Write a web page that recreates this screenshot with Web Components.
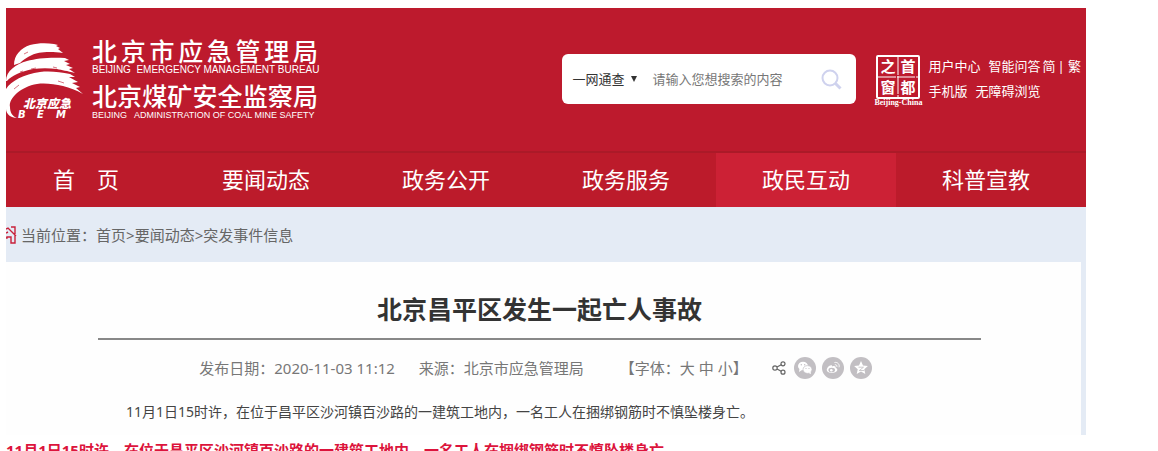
<!DOCTYPE html>
<html lang="zh-CN">
<head>
<meta charset="utf-8">
<title>北京昌平区发生一起亡人事故</title>
<style>
  html {
    overflow: hidden;
  }
  body {
    margin: 8px 72px 0 6px;
    background: #fff;
    color: #666;
    font: 15px/20px "Noto Sans", "Noto Sans CJK SC", sans-serif;
  }
  .lead {
    margin: 5px 0 0;
    color: #dc143c;
    font-weight: bold;
    white-space: nowrap;
  }
</style>
</head>
<body>
<site-header>
  <site-logo></site-logo>
  <search-box placeholder="请输入您想搜索的内容"></search-box>
  <user-links></user-links>
</site-header>
<site-nav>
  <nav-item>首　页</nav-item>
  <nav-item>要闻动态</nav-item>
  <nav-item>政务公开</nav-item>
  <nav-item>政务服务</nav-item>
  <nav-item active>政民互动</nav-item>
  <nav-item>科普宣教</nav-item>
</site-nav>
<bread-crumb></bread-crumb>
<news-article date="2020-11-03 11:12" source="北京市应急管理局">
  <span slot="title">北京昌平区发生一起亡人事故</span>
  11月1日15时许，在位于昌平区沙河镇百沙路的一建筑工地内，一名工人在捆绑钢筋时不慎坠楼身亡。
</news-article>
<p class="lead">11月1日15时许，在位于昌平区沙河镇百沙路的一建筑工地内，一名工人在捆绑钢筋时不慎坠楼身亡。</p>

<script>
class SiteHeader extends HTMLElement {
  constructor() {
    super();
    this.attachShadow({ mode: 'open' });
    this.shadowRoot.innerHTML = `
      <style>
        :host {
          display: flex;
          align-items: flex-start;
          box-sizing: border-box;
          height: 143px;
          padding-top: 28px;
          background: #bd1a2d;
          color: #fff;
        }
        ::slotted(search-box) {
          margin: 18px 18px 0 auto;
        }
        ::slotted(user-links) {
          margin-top: 18px;
        }
      </style>
      <slot></slot>
    `;
  }
}

class SiteLogo extends HTMLElement {
  constructor() {
    super();
    this.attachShadow({ mode: 'open' });
    this.shadowRoot.innerHTML = `
      <style>
        :host {
          display: flex;
          gap: 8px;
        }
        svg {
          margin-top: 7px;
          overflow: visible;
        }
        .names {
          width: 226px;
        }
        .cn {
          height: 28px;
          font-size: 25px;
          line-height: 28px;
          font-weight: 500;
          font-family: "Noto Sans CJK SC", sans-serif;
          text-align-last: justify;
          white-space: nowrap;
        }
        .en {
          height: 17px;
          font: 10px/12px "Liberation Sans", sans-serif;
          white-space: nowrap;
        }
        .small {
          font-size: 9px;
        }
      </style>
      <svg width="78" height="78" viewBox="0 0 78 78" fill="#fff">
        <path d="M8 22C8 12 15 5 24 2 32 0 40 0 48 1l4 1-2 1 4 2-2 1 5 4C52 9 48 9 44 9 35 9 30 10 26 12c-5 2-9 5-12 8z"/>
        <path d="M0 38C0 28 10 21 21 18c10-3 25-4 38-3l4 2-5 1 6 3-4 1 7 3-4 1 6 4C61 28 56 27 51 26c-8-1-16-1-24 0-6 1-12 3-16 5-4 2-8 4-10 7z"/>
        <path d="M0 46C5 38 18 31 34 29c10-1 20 0 30 2l5 3-6 0 9 5-6 1 8 4-4 1 7 6C70 47 64 45 57 43c-9-2-18-3-26-2-8 1-15 5-20 9-5 5-8 9-7 14 0 5 2 9 7 11C5 75 0 71 0 66z"/>
        <path d="M18 11l4-2M14 29l3-1M25 26l5-1M8 46l5-4M52 38l6 2M47 24l4 1" stroke="#bd1a2d" stroke-width=".6" fill="none"/>
        <text x="17" y="65" font-size="12" font-weight="900" font-style="italic" font-family="Noto Sans CJK SC">北京应急</text>
        <text x="12 31 50" y="75" font-size="10" font-weight="bold" font-style="italic" font-family="DejaVu Sans">BEM</text>
      </svg>
      <div class="names">
        <div class="cn">北京市应急管理局</div>
        <div class="en">BEIJING &nbsp;EMERGENCY MANAGEMENT BUREAU</div>
        <div class="cn">北京煤矿安全监察局</div>
        <div class="en small">BEIJING &nbsp; ADMINISTRATION OF COAL MINE SAFETY</div>
      </div>
    `;
  }
}

class SearchBox extends HTMLElement {
  constructor() {
    super();
    this.attachShadow({ mode: 'open' });
  }

  connectedCallback() {
    this.shadowRoot.innerHTML = `
      <style>
        :host {
          display: block;
          width: 294px;
        }
        form {
          display: flex;
          align-items: center;
          height: 50px;
          padding: 0 14px 0 10px;
          box-sizing: border-box;
          border-radius: 6px;
          background: #fff;
        }
        select, input, button {
          margin: 0;
          padding: 0;
          border: 0;
          outline: 0;
          background: none;
          font: inherit;
        }
        select {
          appearance: none;
          width: 68px;
          color: #333;
          font-size: 13px;
          background: url("data:image/svg+xml,%3Csvg xmlns='http://www.w3.org/2000/svg' width='6' height='6'%3E%3Cpath d='M0 0h6L3 6z' fill='%23333'/%3E%3C/svg%3E") no-repeat 59px 7px;
        }
        input {
          flex: 1;
          min-width: 0;
          margin-left: 12px;
          font-size: 13px;
        }
        input::placeholder {
          color: #777;
          opacity: 1;
        }
        button {
          display: flex;
        }
      </style>
      <form>
        <select aria-label="搜索范围"><option>一网通查</option></select>
        <input type="text" aria-label="搜索" placeholder="${this.getAttribute('placeholder')}">
        <button type="button" aria-label="搜索">
          <svg width="21" height="21" viewBox="0 0 21 21" fill="none" stroke="#cfd2ee" stroke-width="2">
            <circle cx="9" cy="9" r="7.5"/>
            <path d="M14.5 14.5l5 5" stroke-width="3"/>
          </svg>
        </button>
      </form>
    `;
  }
}

class UserLinks extends HTMLElement {
  constructor() {
    super();
    this.attachShadow({ mode: 'open' });
    this.shadowRoot.innerHTML = `
      <style>
        :host {
          display: flex;
          gap: 6px;
          padding-right: 5px;
          font-size: 13px;
          white-space: nowrap;
        }
        a {
          color: inherit;
          text-decoration: none;
        }
        .seal {
          display: flex;
          flex-direction: column;
          align-items: center;
          width: 48px;
          margin-top: 1px;
          font: bold 8px/8px "Liberation Serif", serif;
        }
        .seal svg {
          overflow: visible;
        }
        .row {
          display: flex;
          height: 25px;
          line-height: 24px;
        }
        .row a {
          margin-right: 8px;
        }
        .row .near {
          margin-right: 2px;
        }
        .row .last {
          margin-right: 0;
        }
      </style>
      <a class="seal" href="#">
        <svg width="44" height="44" viewBox="0 0 44 44" fill="#fff" font-size="15" font-weight="bold" font-family="Noto Sans CJK SC" text-anchor="middle">
          <rect x="1" y="1" width="42" height="42" rx="1" fill="none" stroke="#fff" stroke-width="2"/>
          <path d="M22 2v40M2 22h40" stroke="#fff" stroke-dasharray="18 1"/>
          <text x="12" y="17">之</text>
          <text x="32" y="17">首</text>
          <text x="12" y="38">窗</text>
          <text x="32" y="38">都</text>
        </svg>
        Beijing-China
      </a>
      <div>
        <div class="row"><a href="#">用户中心</a><a class="near" href="#">智能问答</a><a class="near" href="#">简</a>|&nbsp;<a class="last" href="#">繁</a></div>
        <div class="row"><a href="#">手机版</a><a href="#">无障碍浏览</a></div>
      </div>
    `;
  }
}

class SiteNav extends HTMLElement {
  constructor() {
    super();
    this.attachShadow({ mode: 'open' });
    this.shadowRoot.innerHTML = `
      <style>
        :host {
          display: block;
          overflow: hidden;
          border-top: 2px solid #ab1a28;
          background: #bc1b2b;
        }
        nav {
          display: grid;
          grid-template-columns: repeat(6, 1fr);
          margin: 0 10px 0 -10px;
        }
      </style>
      <nav><slot></slot></nav>
    `;
  }
}

class NavItem extends HTMLElement {
  constructor() {
    super();
    this.attachShadow({ mode: 'open' });
    this.shadowRoot.innerHTML = `
      <style>
        :host {
          display: block;
        }
        :host([active]) {
          background: #cc2135;
        }
        a {
          display: block;
          height: 54px;
          color: #fff;
          font-size: 22px;
          line-height: 52px;
          text-align: center;
          text-decoration: none;
        }
      </style>
      <a href="#"><slot></slot></a>
    `;
  }
}

class BreadCrumb extends HTMLElement {
  constructor() {
    super();
    this.attachShadow({ mode: 'open' });
    this.shadowRoot.innerHTML = `
      <style>
        :host {
          display: flex;
          align-items: center;
          gap: 4px;
          height: 55px;
          background: #e4ebf5;
        }
        a {
          color: inherit;
          text-decoration: none;
        }
      </style>
      <svg width="11" height="18" viewBox="0 0 11 18" fill="none" stroke="#c8203a" stroke-width="1.4">
        <path d="M0 3l2-1 8 8M5 1h4v7M0 7l2-1M9 9v8H5v-6H1v1H0"/>
      </svg>
      <span>当前位置：<a href="#">首页</a>&gt;<a href="#">要闻动态</a>&gt;<a href="#">突发事件信息</a></span>
    `;
  }
}

class ShareBar extends HTMLElement {
  constructor() {
    super();
    this.attachShadow({ mode: 'open' });
    this.shadowRoot.innerHTML = `
      <style>
        :host {
          display: flex;
          align-items: center;
          gap: 6px;
        }
        a {
          display: flex;
        }
        svg {
          display: block;
        }
        .share {
          margin-right: 2px;
        }
      </style>
      <a class="share" href="#" aria-label="分享">
        <svg width="14" height="14" viewBox="0 0 14 14" fill="none" stroke="#666" stroke-width="1.2">
          <circle cx="3" cy="7" r="2.2"/><circle cx="11" cy="2.8" r="2"/><circle cx="11" cy="11.2" r="2"/>
          <path d="M5 6l4.2-2.3M5 8l4.2 2.3"/>
        </svg>
      </a>
      <a href="#" aria-label="微信">
        <svg width="22" height="22" viewBox="0 0 22 22">
          <circle cx="11" cy="11" r="11" fill="#c2bfc3"/>
          <ellipse cx="9" cy="9" rx="5" ry="4.3" fill="#fff"/>
          <path d="M5.5 11.5L5 15l3-2z" fill="#fff"/>
          <ellipse cx="13.5" cy="12.5" rx="4.5" ry="3.9" fill="#fff" stroke="#c2bfc3" stroke-width=".7"/>
          <path d="M14.5 16l2.5 1-.5-2.5z" fill="#fff"/>
          <g fill="#c2bfc3"><circle cx="7.3" cy="7.8" r=".7"/><circle cx="10.7" cy="7.8" r=".7"/><circle cx="12" cy="11.5" r=".6"/><circle cx="15" cy="11.5" r=".6"/></g>
        </svg>
      </a>
      <a href="#" aria-label="微博">
        <svg width="22" height="22" viewBox="0 0 22 22" fill="none" stroke="#fff">
          <circle cx="11" cy="11" r="11" fill="#c2bfc3" stroke="none"/>
          <path d="M10 8.5C8 7 4.500 11 4.800 13.200c.5 3.500 9 3.800 10.400.3.600-1.500-.5-2.200-1.500-2.500.5-2-1.500-2.500-3.700-1.600z" fill="#fff" stroke="none"/>
          <ellipse cx="9.7" cy="13" rx="3.3" ry="2.3" fill="#c2bfc3" stroke="none"/>
          <circle cx="9.3" cy="13.2" r="1.3" fill="#fff" stroke="none"/>
          <path d="M12.5 5.5c3-.8 5.5 2 4.5 4.800M12.8 7.800c1.5-.3 2.500.7 2.100 2"/>
        </svg>
      </a>
      <a href="#" aria-label="QQ空间">
        <svg width="22" height="22" viewBox="0 0 22 22">
          <circle cx="11" cy="11" r="11" fill="#c2bfc3"/>
          <path d="M11 4l2 4.500 4.900.5-3.600 3.300 1 4.800-4.300-2.500-4.300 2.500 1-4.800L4.100 9 9 8.500z" fill="#fff"/>
          <path d="M8.500 10.200h5l-4.200 3.300h5" fill="none" stroke="#c2bfc3" stroke-width=".8"/>
        </svg>
      </a>
    `;
  }
}

class NewsArticle extends HTMLElement {
  constructor() {
    super();
    this.attachShadow({ mode: 'open' });
  }

  connectedCallback() {
    this.shadowRoot.innerHTML = `
      <style>
        :host {
          display: block;
          padding-bottom: 13px;
          border-right: 5px solid #e4ebf5;
          background: #fefefe;
        }
        article {
          margin: 0 100px 0 92px;
        }
        h1 {
          margin: 0;
          padding: 37px 0 19px;
          border-bottom: 2px solid #888;
          color: #333;
          font-size: 25px;
          line-height: 20px;
          text-align: center;
        }
        .meta {
          display: flex;
          justify-content: center;
          align-items: center;
          gap: 24px;
          height: 55px;
          padding-right: 8px;
          color: #777;
          white-space: nowrap;
        }
        .size {
          margin-left: 12px;
        }
        a {
          color: inherit;
          text-decoration: none;
        }
        p {
          margin: 0;
          padding: 7px 0 0 28px;
          color: #444;
          font-size: 14px;
          white-space: nowrap;
        }
      </style>
      <article>
        <h1><slot name="title"></slot></h1>
        <div class="meta">
          <span>发布日期：${this.getAttribute('date')}</span>
          <span>来源：${this.getAttribute('source')}</span>
          <span class="size">【字体：<a href="#">大</a> <a href="#">中</a> <a href="#">小</a>】</span>
          <share-bar></share-bar>
        </div>
        <p><slot></slot></p>
      </article>
    `;
  }
}

customElements.define('site-header', SiteHeader);
customElements.define('site-logo', SiteLogo);
customElements.define('search-box', SearchBox);
customElements.define('user-links', UserLinks);
customElements.define('site-nav', SiteNav);
customElements.define('nav-item', NavItem);
customElements.define('bread-crumb', BreadCrumb);
customElements.define('share-bar', ShareBar);
customElements.define('news-article', NewsArticle);
</script>
</body>
</html>
